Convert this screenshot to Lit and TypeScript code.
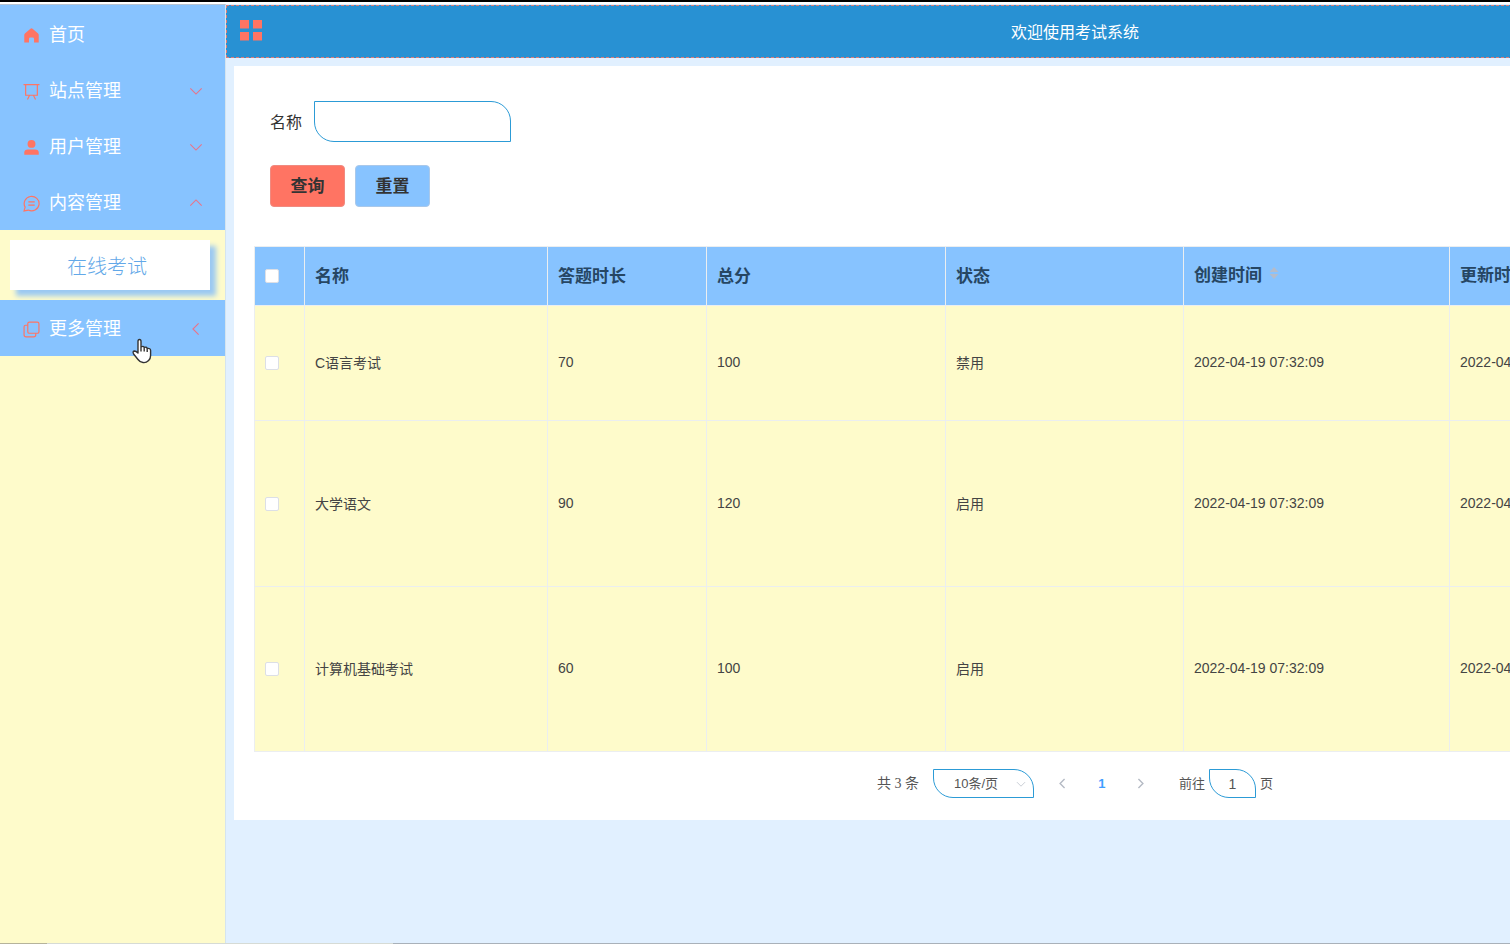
import { LitElement, html, svg, css } from "lit";
import { customElement, state } from "lit/decorators.js";

interface Exam {
  name: string;
  minutes: number;
  total: number;
  status: string;
  created: string;
  updated: string;
  size: string;
}

const exams: Exam[] = [
  { name: "C语言考试", minutes: 70, total: 100, status: "禁用", created: "2022-04-19 07:32:09", updated: "2022-04-19 07:32:09", size: "short" },
  { name: "大学语文", minutes: 90, total: 120, status: "启用", created: "2022-04-19 07:32:09", updated: "2022-04-19 07:32:09", size: "tall" },
  { name: "计算机基础考试", minutes: 60, total: 100, status: "启用", created: "2022-04-19 07:32:09", updated: "2022-04-19 07:32:09", size: "tall" },
];

const chevrons = {
  down: "M1.5 5 L8 11.5 L14.5 5",
  up: "M1.5 11 L8 4.5 L14.5 11",
  left: "M11 1.5 L4.5 8 L11 14.5",
  right: "M5 1.5 L11.5 8 L5 14.5",
};

const chevron = (dir: keyof typeof chevrons) => html`
  <svg class="chevron" viewBox="0 0 16 16" aria-hidden="true"><path d=${chevrons[dir]} /></svg>
`;

const glyphs = {
  home: svg`<path class="solid" d="M7 1.6 Q8 .8 9 1.6 L14.2 6 Q14.8 6.6 14.8 7.4 V14.6 H10.4 V11.2 Q10.4 9.8 9 9.8 H7 Q5.6 9.8 5.6 11.2 V14.6 H1.2 V7.4 Q1.2 6.6 1.8 6 Z" />`,
  board: svg`<path d="M.5 1.5 H15.5 M2.5 1.5 V11.5 H13.5 V1.5 M6.2 11.5 L4.2 15.5 M9.8 11.5 L11.8 15.5" />`,
  user: svg`<circle class="solid" cx="8" cy="4.6" r="3.7" /><path class="solid" d="M1.2 14.8 V12.8 Q1.2 9.8 4.6 9.8 H11.4 Q14.8 9.8 14.8 12.8 V14.8 Z" />`,
  chat: svg`<path d="M1 15 L2 11.4 A7 6.8 0 1 1 5 14.2 Z M5 6.5 H11 M5 9.5 H11" />`,
  copy: svg`<rect x="4.5" y="1" width="10.5" height="10.5" rx="1.5" /><path d="M4.5 4 H2.5 Q1 4 1 5.5 V13 Q1 15 3 15 H10 Q12 15 12 13 V11.5" />`,
};

@customElement("app-root")
export class AppRoot extends LitElement {
  static styles = css`
    :host {
      display: block;
      overflow: hidden;
      font-family: "Liberation Sans", "Noto Sans CJK SC", sans-serif;
      color: #333;
    }
    * { box-sizing: border-box; }
    button, input, select { font: inherit; color: inherit; margin: 0; }
    svg { display: block; fill: none; stroke: currentColor; }

    .shell {
      display: grid;
      grid-template-columns: 226px 1fr;
      grid-template-rows: 1fr 1px;
      min-width: 1924px;
      min-height: 100vh;
      border-top: 2px solid #000;
      padding-top: 2px;
      background: #fff;
    }
    .edge {
      grid-column: 1 / -1;
      background: linear-gradient(90deg, #b5b39b 47px, #d6dbd5 47px 393px, #a9b1b9 393px);
    }

    .side {
      background: #fefbcb;
      border-right: 1px solid #d5e4ee;
      border-top: 1px solid #b5c4d4;
    }
    .menu { list-style: none; margin: 0; padding: 0; }
    .menu > li:first-child { padding-top: 1px; background: #87c3ff; }
    .item {
      display: flex;
      align-items: center;
      width: 100%;
      height: 56px;
      padding: 0 22px 0 23px;
      border: 0;
      background: #87c3ff;
      color: #fff;
      font-size: 18px;
      text-align: left;
      text-decoration: none;
      cursor: pointer;
    }
    .item .label { flex: 1; margin-left: 9px; padding-bottom: 2px; }
    .icon { width: 17px; height: 17px; color: #ff7463; margin-top: 2px; stroke-width: 1.1; }
    .item .chevron { width: 14px; height: 14px; color: #e8748a; margin-top: 2px; stroke-width: 1.3; }
    .solid { fill: currentColor; stroke: none; }
    .sub { padding: 10px 15px 10px 10px; }
    .sub a {
      display: block;
      height: 50px;
      line-height: 50px;
      background: #fff;
      box-shadow: 6px 6px 5px #9bc9f2;
      color: #62a8e8;
      font-size: 20px;
      font-weight: 300;
      text-align: center;
      padding: 2px 6px 0 0;
      text-decoration: none;
    }

    .main { background: #e1f0ff; padding-top: 1px; }
    .top {
      display: grid;
      grid-template-columns: 1fr auto 1fr;
      align-items: center;
      height: 53px;
      padding: 0 12px;
      border: 1px dashed #e07c76;
      background: #2891d3;
      color: #fff;
    }
    .title { margin: 0; padding-bottom: 2px; font-size: 16px; font-weight: 400; }
    .grid-button {
      justify-self: start;
      padding: 0;
      border: 0;
      background: none;
      color: #ff7463;
      cursor: pointer;
    }
    .grid-button svg { width: 24px; height: 24px; margin-bottom: 4px; }

    .card { margin: 8px; padding: 35px 20px 22px; background: #fff; }
    .search { padding: 0 16px 39px; }
    .field { display: flex; align-items: center; gap: 12px; font-size: 16px; }
    .field label { padding-bottom: 2px; }
    .leaf {
      border: 1px solid #2c9bd6;
      border-radius: 0 20px 0 20px;
      background: #fff;
      outline: 0;
    }
    .field .leaf { width: 197px; height: 41px; padding: 0 12px; }
    .actions { display: flex; gap: 10px; margin-top: 23px; }
    .action {
      width: 75px;
      height: 42px;
      padding: 0 0 3px;
      border: 1px solid #f08a80;
      border-radius: 4px;
      background: #ff7463;
      color: #333;
      font-size: 17px;
      font-weight: 700;
      cursor: pointer;
    }
    .action.reset { background: #87c3ff; border-color: #a9c8ea; }

    .table {
      width: 100%;
      table-layout: fixed;
      border-collapse: collapse;
      font-size: 14px;
    }
    .table th, .table td { border: 1px solid #ebeef0; padding: 0 10px 2px; text-align: left; }
    .table th { height: 59px; padding-bottom: 3px; background: #87c3ff; color: #264663; font-size: 17px; }
    .table .pick { padding-bottom: 0; }
    .table td { background: #fefbcb; color: #444; }
    .short { height: 115px; }
    .tall { height: 166px; }
    .tall:last-child { height: 165px; }
    .c-check { width: 50px; }
    .c-name { width: 243px; }
    .c-time { width: 159px; }
    .c-total { width: 239px; }
    .c-status { width: 238px; }
    .c-date { width: 266px; }
    .sortable { display: flex; align-items: center; gap: 7px; padding-bottom: 3px; }
    .sort { width: 10px; height: 14px; color: #b4bccb; }
    .check {
      display: block;
      appearance: none;
      width: 14px;
      height: 14px;
      border: 1px solid #dcdfe6;
      border-radius: 2px;
      background: #fff;
    }
    .check:checked { background: #409eff; }

    .pager {
      display: flex;
      justify-content: center;
      align-items: center;
      margin-top: 17px;
      font-size: 13px;
      color: #555;
    }
    .total { padding-bottom: 4px; font-family: "Liberation Serif", "Noto Sans CJK SC", serif; font-size: 14px; }
    .size { position: relative; margin: 0 14px; }
    .size select {
      appearance: none;
      display: block;
      width: 101px;
      height: 29px;
      padding: 0 20px 1px;
    }
    .size .chevron { position: absolute; right: 8px; top: 10px; width: 10px; height: 10px; color: #aab2be; }
    .pages { display: flex; gap: 9px; margin-right: 23px; }
    .page {
      display: grid;
      place-items: center;
      width: 30px;
      height: 28px;
      padding: 0;
      border: 0;
      background: none;
      color: #b4bac4;
      cursor: pointer;
    }
    .page .chevron { width: 11px; height: 11px; stroke-width: 2; }
    .page.current { color: #409eff; font-weight: 700; }
    .jump { display: flex; align-items: center; gap: 4px; }
    .jump label, .jump span { padding-bottom: 2px; }
    .jump .leaf { width: 47px; height: 29px; padding: 0; text-align: center; font-size: 14px; }

    .pointer { position: absolute; left: 132px; top: 338px; width: 20px; height: 27px; pointer-events: none; }
    .pointer path { fill: #fff; stroke: #333; stroke-width: 1.4; stroke-linejoin: round; }
  `;

  @state() private contentOpen = true;

  private group(label: string, icon: keyof typeof glyphs, dir: keyof typeof chevrons, toggle?: () => void) {
    return html`
      <button class="item" type="button" @click=${toggle}>
        <svg class="icon" viewBox="0 0 16 16" aria-hidden="true">${glyphs[icon]}</svg>
        <span class="label">${label}</span>
        ${chevron(dir)}
      </button>
    `;
  }

  render() {
    return html`
      <div class="shell">
        <nav class="side">
          <ul class="menu">
            <li>
              <a class="item" href="#home">
                <svg class="icon" viewBox="0 0 16 16" aria-hidden="true">${glyphs.home}</svg>
                <span class="label">首页</span>
              </a>
            </li>
            <li>${this.group("站点管理", "board", "down")}</li>
            <li>${this.group("用户管理", "user", "down")}</li>
            <li>
              ${this.group("内容管理", "chat", this.contentOpen ? "up" : "down", () => (this.contentOpen = !this.contentOpen))}
              ${this.contentOpen ? html`<div class="sub"><a href="#exam">在线考试</a></div>` : ""}
            </li>
            <li>${this.group("更多管理", "copy", "left")}</li>
          </ul>
        </nav>

        <div class="main">
          <header class="top">
            <button class="grid-button" type="button" aria-label="菜单">
              <svg viewBox="0 0 24 24">
                <path class="solid" d="M1 2 H10 V10.5 H1 Z M14 2 H23 V10.5 H14 Z M1 14 H10 V22.5 H1 Z M14 14 H23 V22.5 H14 Z" />
              </svg>
            </button>
            <h1 class="title">欢迎使用考试系统</h1>
          </header>

          <main class="card">
            <form class="search" @submit=${(e: Event) => e.preventDefault()}>
              <div class="field">
                <label for="name">名称</label>
                <input class="leaf" id="name" type="text" />
              </div>
              <div class="actions">
                <button class="action" type="submit">查询</button>
                <button class="action reset" type="reset">重置</button>
              </div>
            </form>

            <table class="table">
              <colgroup>
                <col class="c-check" /><col class="c-name" /><col class="c-time" />
                <col class="c-total" /><col class="c-status" /><col class="c-date" /><col />
              </colgroup>
              <thead>
                <tr>
                  <th class="pick"><input class="check" type="checkbox" aria-label="全选" /></th>
                  <th>名称</th>
                  <th>答题时长</th>
                  <th>总分</th>
                  <th>状态</th>
                  <th>
                    <span class="sortable">创建时间
                      <svg class="sort" viewBox="0 0 10 14" aria-hidden="true">
                        <path class="solid" d="M5 1 L9.5 6 H.5 Z M5 13 L9.5 8 H.5 Z" />
                      </svg>
                    </span>
                  </th>
                  <th><span class="sortable">更新时间</span></th>
                </tr>
              </thead>
              <tbody>
                ${exams.map(
                  (x) => html`
                    <tr class=${x.size}>
                      <td class="pick"><input class="check" type="checkbox" aria-label=${x.name} /></td>
                      <td>${x.name}</td>
                      <td>${x.minutes}</td>
                      <td>${x.total}</td>
                      <td>${x.status}</td>
                      <td>${x.created}</td>
                      <td>${x.updated}</td>
                    </tr>
                  `
                )}
              </tbody>
            </table>

            <div class="pager">
              <span class="total">共 3 条</span>
              <div class="size">
                <select class="leaf" aria-label="每页条数"><option>10条/页</option></select>
                ${chevron("down")}
              </div>
              <div class="pages">
                <button class="page" type="button" aria-label="上一页">${chevron("left")}</button>
                <button class="page current" type="button">1</button>
                <button class="page" type="button" aria-label="下一页">${chevron("right")}</button>
              </div>
              <div class="jump">
                <label for="jump">前往</label>
                <input class="leaf" id="jump" type="text" .value=${"1"} />
                <span>页</span>
              </div>
            </div>
          </main>
        </div>
        <div class="edge"></div>
      </div>

      <svg class="pointer" viewBox="0 0 20 26" aria-hidden="true">
        <path d="M6 3 Q6 1 7.5 1 Q9 1 9 3 V8.5 Q11.5 7 12.2 9 Q14.5 8 15.2 10 Q18.6 9.5 18.6 12 V17 Q18.6 20 16.6 22 Q14 24.5 11 24 Q8 23.8 6 21 L1.6 15.5 Q.3 13 2.3 12.5 Q4 12.5 6 14.5 Z M9 8.5 V13 M12.2 9 V13 M15.2 10 V13.5" />
      </svg>
    `;
  }
}
